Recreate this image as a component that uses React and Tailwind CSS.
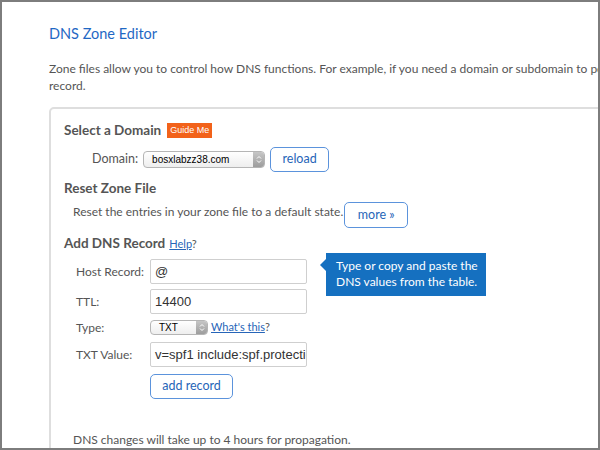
import React from 'react';

const font = { fontFamily: 'Lato, "Open Sans", sans-serif' };

const Spinner = () => (
  <svg width="6" height="9" viewBox="0 0 6 9">
    <path d="M1 3.5 L3 1.5 L5 3.5" fill="none" stroke="#fff" strokeWidth="1" />
    <path d="M1 5.5 L3 7.5 L5 5.5" fill="none" stroke="#fff" strokeWidth="1" />
  </svg>
);

const FakeSelect = ({ value, width, height }) => (
  <div
    className={`flex items-stretch rounded-[4px] border border-[#b5b5b5] bg-gradient-to-b from-white to-[#eee] overflow-hidden ${width} ${height}`}
  >
    <div className="flex-1 flex items-center pl-2 text-[10px] text-black font-['Liberation_Sans',sans-serif]">
      {value}
    </div>
    <div className="w-[11px] flex items-center justify-center bg-gradient-to-b from-[#c6c6c6] to-[#9d9d9d]">
      <Spinner />
    </div>
  </div>
);

const Btn = ({ children, className = '' }) => (
  <button
    className={`h-[25px] rounded-[5px] border border-[#5b93dc] bg-white text-[12.5px] text-[#2765b8] ${className}`}
  >
    {children}
  </button>
);

const TextInput = ({ value }) => (
  <div className="w-[157px] h-[25px] border border-[#cfcfcf] rounded-[2px] flex items-center px-[4px] overflow-hidden whitespace-nowrap text-[13px] text-[#333] font-['Liberation_Sans',sans-serif]">
    {value}
  </div>
);

const Row = ({ label, children, className = '' }) => (
  <div className={`flex items-center ${className}`}>
    <div className="w-[74px] text-[12px] text-[#555]">{label}</div>
    {children}
  </div>
);

export default function App() {
  return (
    <div
      className="w-[600px] h-[450px] border-2 border-[#7d7d7d] bg-white overflow-hidden"
      style={font}
    >
      <div className="w-[640px] pl-[47px] pt-[22px]">
        <h1 className="text-[14.5px] leading-[20px] text-[#1f68c4]">DNS Zone Editor</h1>

        <p className="mt-[16px] text-[12px] leading-[17px] text-[#555] whitespace-nowrap">
          Zone files allow you to control how DNS functions. For example, if you need a domain or
          subdomain to point to
          <br />
          record.
        </p>

        <div className="relative mt-[13px] h-[400px] rounded-tl-[5px] border-2 border-[#dedede] pl-[13px] pt-[12px]">
          <div className="flex items-center gap-[6px] h-[18px]">
            <span className="text-[13.5px] font-bold text-[#555]">Select a Domain</span>
            <span className="bg-[#f2621a] text-white text-[9px] leading-[15px] px-[3px] font-['Liberation_Sans',sans-serif]">
              Guide Me
            </span>
          </div>

          <div className="flex items-center mt-[8px] pl-[28px] h-[25px]">
            <span className="text-[12.5px] text-[#555] mr-[5px]">Domain:</span>
            <FakeSelect value="bosxlabzz38.com" width="w-[122px]" height="h-[17px]" />
            <Btn className="ml-[5px] w-[59px]">reload</Btn>
          </div>

          <div className="mt-[7px] text-[13.5px] leading-[18px] font-bold text-[#555]">Reset Zone File</div>

          <div className="flex items-end pl-[9px] mt-[5px] h-[26px]">
            <span className="text-[12px] text-[#555] pb-[7px]">
              Reset the entries in your zone file to a default state.
            </span>
            <Btn className="ml-[1px] w-[64px] h-[26px]">more »</Btn>
          </div>

          <div className="mt-[5px] flex items-baseline gap-[4px] h-[18px]">
            <span className="text-[13.5px] font-bold text-[#555]">Add DNS Record</span>
            <span className="text-[11px] text-[#555]">
              <span className="text-[#2765b8] underline">Help</span>?
            </span>
          </div>

          <div className="pl-[12px] mt-[8px] flex flex-col">
            <Row label="Host Record:">
              <TextInput value="@" />
            </Row>
            <Row label="TTL:" className="mt-[5px]">
              <TextInput value="14400" />
            </Row>
            <Row label="Type:" className="mt-[6px] h-[15px]">
              <FakeSelect value="TXT" width="w-[58px]" height="h-[15px]" />
              <span className="ml-[3px] text-[11px] text-[#555]">
                <span className="text-[#2765b8] underline">What's this</span>?
              </span>
            </Row>
            <Row label="TXT Value:" className="mt-[7px]">
              <TextInput value="v=spf1 include:spf.protection.outlook.com -all" />
            </Row>
            <div className="mt-[5px] pl-[74px]">
              <Btn className="w-[83px]">add record</Btn>
            </div>
          </div>

          <p className="mt-[32px] pl-[9px] text-[12px] leading-[18px] text-[#555]">
            DNS changes will take up to 4 hours for propagation.
          </p>

          <div className="absolute left-[275px] top-[144px] w-[160px] h-[43px] bg-[#1570c0] pl-[10px] pt-[5px] text-[12px] leading-[16px] text-white">
            <div className="absolute -left-[6px] top-[6px] w-0 h-0 border-y-[6px] border-y-transparent border-r-[6px] border-r-[#1570c0]" />
            Type or copy and paste the
            <br />
            DNS values from the table.
          </div>
        </div>
      </div>
    </div>
  );
}
